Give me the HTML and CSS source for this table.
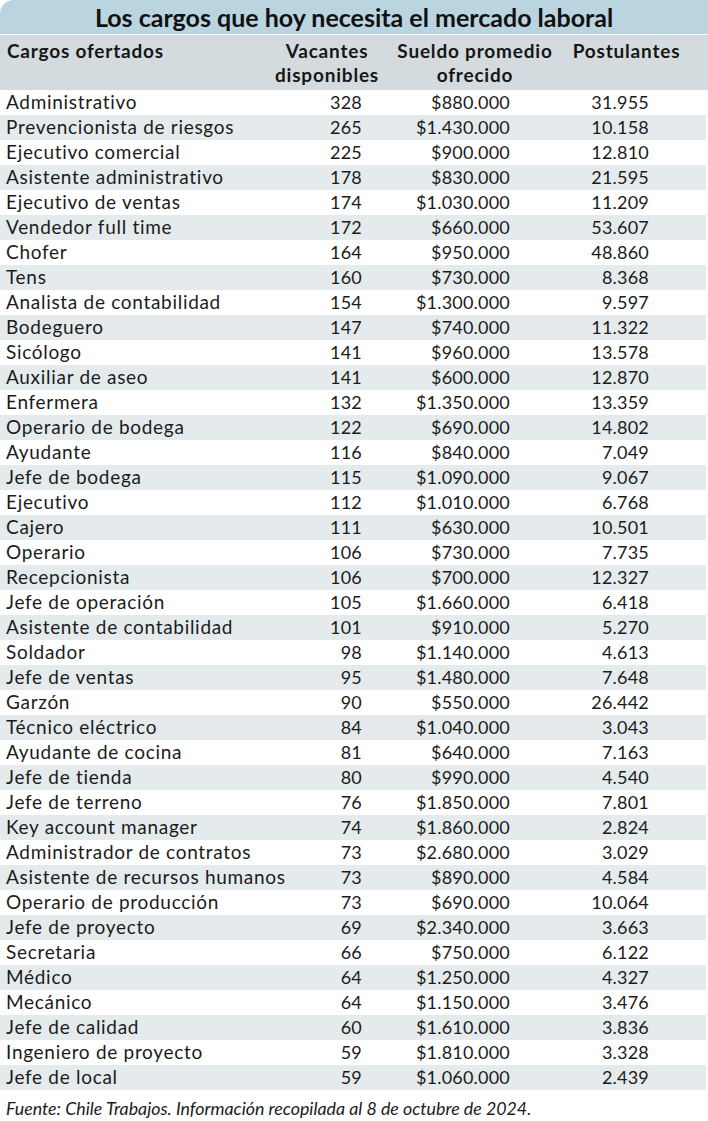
FILE: index.html
```html
<!DOCTYPE html>
<html lang="es">
<head>
<meta charset="utf-8">
<title>Los cargos que hoy necesita el mercado laboral</title>
<link rel="stylesheet" href="styles.css">
</head>
<body>
<div class="sheet">
  <div class="title">Los cargos que hoy necesita el mercado laboral</div>
  <div class="head">
    <div class="h-name">Cargos ofertados</div>
    <div class="h-col">Vacantes<br>disponibles</div>
    <div class="h-col">Sueldo promedio<br>ofrecido</div>
    <div class="h-col">Postulantes</div>
  </div>
  <div class="rows">
    <div class="row"><span class="n">Administrativo</span><span class="v">328</span><span class="s">$880.000</span><span class="p">31.955</span></div>
    <div class="row"><span class="n">Prevencionista de riesgos</span><span class="v">265</span><span class="s">$1.430.000</span><span class="p">10.158</span></div>
    <div class="row"><span class="n">Ejecutivo comercial</span><span class="v">225</span><span class="s">$900.000</span><span class="p">12.810</span></div>
    <div class="row"><span class="n">Asistente administrativo</span><span class="v">178</span><span class="s">$830.000</span><span class="p">21.595</span></div>
    <div class="row"><span class="n">Ejecutivo de ventas</span><span class="v">174</span><span class="s">$1.030.000</span><span class="p">11.209</span></div>
    <div class="row"><span class="n">Vendedor full time</span><span class="v">172</span><span class="s">$660.000</span><span class="p">53.607</span></div>
    <div class="row"><span class="n">Chofer</span><span class="v">164</span><span class="s">$950.000</span><span class="p">48.860</span></div>
    <div class="row"><span class="n">Tens</span><span class="v">160</span><span class="s">$730.000</span><span class="p">8.368</span></div>
    <div class="row"><span class="n">Analista de contabilidad</span><span class="v">154</span><span class="s">$1.300.000</span><span class="p">9.597</span></div>
    <div class="row"><span class="n">Bodeguero</span><span class="v">147</span><span class="s">$740.000</span><span class="p">11.322</span></div>
    <div class="row"><span class="n">Sicólogo</span><span class="v">141</span><span class="s">$960.000</span><span class="p">13.578</span></div>
    <div class="row"><span class="n">Auxiliar de aseo</span><span class="v">141</span><span class="s">$600.000</span><span class="p">12.870</span></div>
    <div class="row"><span class="n">Enfermera</span><span class="v">132</span><span class="s">$1.350.000</span><span class="p">13.359</span></div>
    <div class="row"><span class="n">Operario de bodega</span><span class="v">122</span><span class="s">$690.000</span><span class="p">14.802</span></div>
    <div class="row"><span class="n">Ayudante</span><span class="v">116</span><span class="s">$840.000</span><span class="p">7.049</span></div>
    <div class="row"><span class="n">Jefe de bodega</span><span class="v">115</span><span class="s">$1.090.000</span><span class="p">9.067</span></div>
    <div class="row"><span class="n">Ejecutivo</span><span class="v">112</span><span class="s">$1.010.000</span><span class="p">6.768</span></div>
    <div class="row"><span class="n">Cajero</span><span class="v">111</span><span class="s">$630.000</span><span class="p">10.501</span></div>
    <div class="row"><span class="n">Operario</span><span class="v">106</span><span class="s">$730.000</span><span class="p">7.735</span></div>
    <div class="row"><span class="n">Recepcionista</span><span class="v">106</span><span class="s">$700.000</span><span class="p">12.327</span></div>
    <div class="row"><span class="n">Jefe de operación</span><span class="v">105</span><span class="s">$1.660.000</span><span class="p">6.418</span></div>
    <div class="row"><span class="n">Asistente de contabilidad</span><span class="v">101</span><span class="s">$910.000</span><span class="p">5.270</span></div>
    <div class="row"><span class="n">Soldador</span><span class="v">98</span><span class="s">$1.140.000</span><span class="p">4.613</span></div>
    <div class="row"><span class="n">Jefe de ventas</span><span class="v">95</span><span class="s">$1.480.000</span><span class="p">7.648</span></div>
    <div class="row"><span class="n">Garzón</span><span class="v">90</span><span class="s">$550.000</span><span class="p">26.442</span></div>
    <div class="row"><span class="n">Técnico eléctrico</span><span class="v">84</span><span class="s">$1.040.000</span><span class="p">3.043</span></div>
    <div class="row"><span class="n">Ayudante de cocina</span><span class="v">81</span><span class="s">$640.000</span><span class="p">7.163</span></div>
    <div class="row"><span class="n">Jefe de tienda</span><span class="v">80</span><span class="s">$990.000</span><span class="p">4.540</span></div>
    <div class="row"><span class="n">Jefe de terreno</span><span class="v">76</span><span class="s">$1.850.000</span><span class="p">7.801</span></div>
    <div class="row"><span class="n">Key account manager</span><span class="v">74</span><span class="s">$1.860.000</span><span class="p">2.824</span></div>
    <div class="row"><span class="n">Administrador de contratos</span><span class="v">73</span><span class="s">$2.680.000</span><span class="p">3.029</span></div>
    <div class="row"><span class="n">Asistente de recursos humanos</span><span class="v">73</span><span class="s">$890.000</span><span class="p">4.584</span></div>
    <div class="row"><span class="n">Operario de producción</span><span class="v">73</span><span class="s">$690.000</span><span class="p">10.064</span></div>
    <div class="row"><span class="n">Jefe de proyecto</span><span class="v">69</span><span class="s">$2.340.000</span><span class="p">3.663</span></div>
    <div class="row"><span class="n">Secretaria</span><span class="v">66</span><span class="s">$750.000</span><span class="p">6.122</span></div>
    <div class="row"><span class="n">Médico</span><span class="v">64</span><span class="s">$1.250.000</span><span class="p">4.327</span></div>
    <div class="row"><span class="n">Mecánico</span><span class="v">64</span><span class="s">$1.150.000</span><span class="p">3.476</span></div>
    <div class="row"><span class="n">Jefe de calidad</span><span class="v">60</span><span class="s">$1.610.000</span><span class="p">3.836</span></div>
    <div class="row"><span class="n">Ingeniero de proyecto</span><span class="v">59</span><span class="s">$1.810.000</span><span class="p">3.328</span></div>
    <div class="row"><span class="n">Jefe de local</span><span class="v">59</span><span class="s">$1.060.000</span><span class="p">2.439</span></div>
  </div>
  <div class="source">Fuente: Chile Trabajos. Información recopilada al 8 de octubre de 2024.</div>
</div>
</body>
</html>
```

FILE: styles.css
```css
html, body {
  margin: 0;
  padding: 0;
  background: #ffffff;
}
body {
  font-family: Lato, "Open Sans", "Liberation Sans", sans-serif;
  color: #1b1b1b;
  width: 708px;
}
.sheet {
  width: 708px;
  display: flex;
  flex-direction: column;
}
.title {
  height: 34px;
  background: #bad4e0;
  border-top-left-radius: 14px;
  border-bottom: 1px solid #ffffff;
  font-weight: 700;
  font-size: 25px;
  line-height: 34px;
  text-align: center;
  color: #111111;
}
.head {
  height: 55px;
  background: #d4dbde;
  display: grid;
  grid-template-columns: 272px 110px 186px 117px 23px;
  font-weight: 700;
  font-size: 19px;
  letter-spacing: 0.8px;
  line-height: 24px;
  padding-top: 4px;
  box-sizing: border-box;
  color: #161616;
}
.h-name {
  padding-left: 7px;
}
.h-col {
  text-align: center;
  white-space: nowrap;
}
.rows {
  width: 706px;
  display: flex;
  flex-direction: column;
}
.row {
  height: 25px;
  display: grid;
  grid-template-columns: 270px 92px 148px 139px 57px;
  align-items: baseline;
  font-size: 18px;
  line-height: 25px;
  white-space: nowrap;
}
.row:nth-child(even) {
  background: #e5ebed;
}
.n {
  padding-left: 6px;
  font-size: 19px;
  line-height: 24px;
  letter-spacing: 0.7px;
}
.v, .s, .p {
  text-align: right;
  letter-spacing: 0.2px;
}
.source {
  font-style: italic;
  font-size: 17.8px;
  padding: 8px 0 0 6px;
  line-height: 20px;
  color: #1b1b1b;
}
```
